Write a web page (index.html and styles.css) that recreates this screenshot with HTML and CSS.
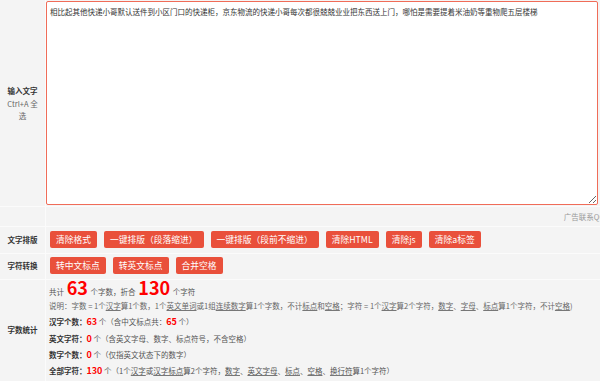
FILE: index.html
```html
<!DOCTYPE html>
<html lang="zh">
<head>
    <meta charset="UTF-8">
    <meta name="viewport" content="width=device-width, initial-scale=1.0">
    <title>字数统计</title>
    <link rel="stylesheet" href="styles.css">
</head>
<body>
    <div class="tool">
        <div class="row row-input">
            <div class="label"><b>输入文字</b><span>Ctrl+A 全选</span></div>
            <div class="cell cell-input">
                <textarea id="content">相比起其他快递小哥默认送件到小区门口的快递柜，京东物流的快递小哥每次都很兢兢业业把东西送上门，哪怕是需要提着米油奶等重物爬五层楼梯</textarea>
            </div>
        </div>
        <div class="row row-ad">
            <div class="label"></div>
            <div class="cell"><div class="ad">广告联系QQ</div></div>
        </div>
        <div class="row row-btn">
            <div class="label"><b>文字排版</b></div>
            <div class="cell btns">
                <button>清除格式</button>
                <button>一键排版（段落缩进）</button>
                <button>一键排版（段前不缩进）</button>
                <button>清除HTML</button>
                <button>清除js</button>
                <button>清除a标签</button>
            </div>
        </div>
        <div class="row row-btn2">
            <div class="label"><b>字符转换</b></div>
            <div class="cell btns">
                <button>转中文标点</button>
                <button>转英文标点</button>
                <button>合并空格</button>
            </div>
        </div>
        <div class="row row-stats">
            <div class="label"><b>字数统计</b></div>
            <div class="cell stats">
                <p class="total">共计 <em>63</em> 个字数，折合 <em>130</em> 个字符</p>
                <p class="note">说明：字数 = 1个<u>汉字</u>算1个数，1个<u>英文单词</u>或1组<u>连续数字</u>算1个字数，不计<u>标点</u>和<u>空格</u>；字符 = 1个<u>汉字</u>算2个字符，<u>数字</u>、<u>字母</u>、<u>标点</u>算1个字符，不计<u>空格</u>)</p>
                <p><b>汉字个数：</b><strong>63</strong> 个（含中文标点共：<strong>65</strong> 个）</p>
                <p><b>英文字符：</b><strong>0</strong> 个（含英文字母、数字、标点符号，不含空格）</p>
                <p><b>数字个数：</b><strong>0</strong> 个（仅指英文状态下的数字）</p>
                <p><b>全部字符：</b><strong>130</strong> 个（1个<u>汉字</u>或<u>汉字标点</u>算2个字符，<u>数字</u>、<u>英文字母</u>、<u>标点</u>、<u>空格</u>、<u>换行符</u>算1个字符）</p>
            </div>
        </div>
    </div>
</body>
</html>
```

FILE: styles.css
```css
body {
    margin: 0;
    background-color: #f4f4f4;
    font-family: "Noto Sans CJK SC", sans-serif;
    font-size: 7.5px;
    color: #555;
    overflow: hidden;
}
.tool {
    width: 600px;
}
.row {
    display: grid;
    grid-template-columns: 46px 1fr;
    border-bottom: 1px solid #fbfbfb;
}
.label {
    border-right: 1px solid #fbfbfb;
    display: flex;
    flex-direction: column;
    align-items: center;
    justify-content: center;
    text-align: center;
    line-height: 12.5px;
    color: #333;
    padding: 0 4px;
}
.label b {
    color: #333;
}
.label span {
    color: #666;
}
.row-input {
    height: 206px;
}
.cell-input {
    padding: 1px 2px 1px 0;
}
textarea {
    width: 100%;
    height: 204px;
    box-sizing: border-box;
    border: 1px solid #f06c58;
    border-radius: 2px;
    padding: 4px 3px;
    font-family: "Noto Sans CJK SC", sans-serif;
    font-size: 7.5px;
    line-height: 12px;
    color: #333;
    background-color: #fff;
    outline: none;
}
.row-ad {
    height: 19px;
}
.ad {
    margin-right: -5px;
    text-align: right;
    line-height: 19px;
    color: #999;
    white-space: nowrap;
}
.btns {
    display: flex;
    gap: 7px;
    padding: 4px 0 0 4px;
    align-items: flex-start;
}
.row-btn {
    height: 26px;
}
.row-btn2 {
    height: 25px;
}
.row-btn2 .btns {
    padding-top: 3px;
}
button {
    height: 17px;
    padding: 0 6px;
    border: none;
    border-radius: 2px;
    background-color: #e9503b;
    color: #fff;
    font-family: "Noto Sans CJK SC", sans-serif;
    font-size: 8.75px;
    line-height: 17px;
    white-space: nowrap;
    cursor: pointer;
}
.row-stats {
    height: 101px;
    border-bottom: none;
}
.stats {
    padding: 0 0 0 3px;
}
.stats p {
    margin: 0;
    line-height: 16.3px;
    white-space: nowrap;
}
.stats .total {
    height: 18px;
    line-height: 18px;
    color: #555;
}
.total em {
    font-style: normal;
    font-weight: bold;
    font-size: 18px;
    line-height: 14px;
    color: #f00;
    padding: 0 1px;
}
.stats .note {
    color: #666;
}
.stats u {
    text-decoration-color: #777;
}
.stats b {
    color: #333;
}
.stats strong {
    color: #f00;
    font-size: 9px;
}
```
